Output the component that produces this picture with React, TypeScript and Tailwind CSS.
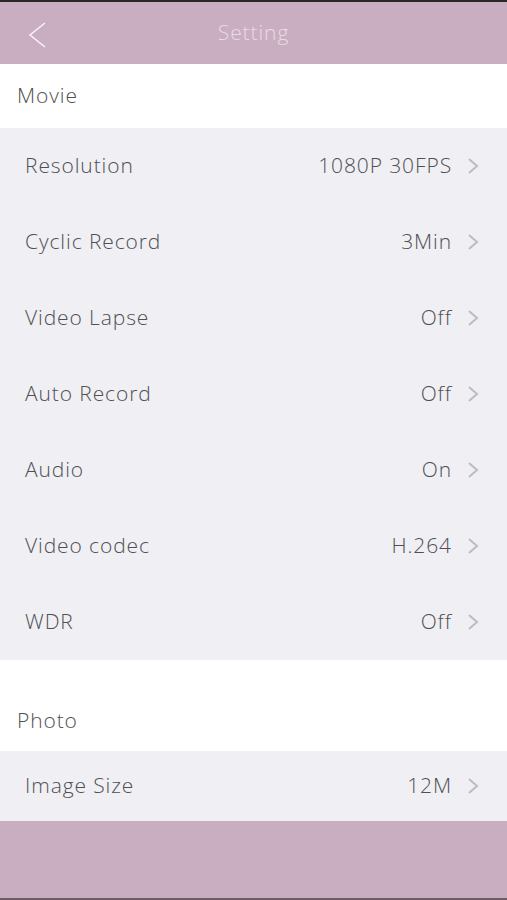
const movie: [string, string][] = [
  ["Resolution", "1080P 30FPS"],
  ["Cyclic Record", "3Min"],
  ["Video Lapse", "Off"],
  ["Auto Record", "Off"],
  ["Audio", "On"],
  ["Video codec", "H.264"],
  ["WDR", "Off"],
];

function Chevron() {
  return (
    <svg width="14" height="18" viewBox="0 0 14 18" className="shrink-0">
      <path d="M3 2 L11 9 L3 16" fill="none" stroke="#bdbdc1" strokeWidth="2" />
    </svg>
  );
}

function Row({ label, value, h }: { label: string; value: string; h: string }) {
  return (
    <div className={`flex items-center justify-between pl-[25px] pr-[27px] ${h}`}>
      <span>{label}</span>
      <span className="flex items-center gap-[14px]">
        {value}
        <Chevron />
      </span>
    </div>
  );
}

export default function App() {
  return (
    <div
      className="w-[507px] h-[900px] flex flex-col bg-white text-[21px] font-light tracking-[0.9px] text-[#505053]"
      style={{ fontFamily: "'Open Sans', Arial, sans-serif" }}
    >
      <div className="h-[2px] bg-[#2b2628]" />
      <header className="h-[62px] bg-[#c8aec0] flex items-center relative">
        <svg className="absolute left-[26px] top-[19px]" width="22" height="28" viewBox="0 0 22 28">
          <path d="M19 2 L4 14 L19 26" fill="none" stroke="#fbf4f8" strokeWidth="1.5" />
        </svg>
        <div className="flex-1 text-center text-[#eadbe5] text-[21px]">Setting</div>
      </header>
      <div className="h-[64px] flex items-center pl-[17px]">Movie</div>
      <div className="bg-[#efeff4]">
        {movie.map(([l, v]) => (
          <Row key={l} label={l} value={v} h="h-[76px]" />
        ))}
      </div>
      <div className="h-[91px] flex items-end pb-[15px] pl-[17px]">Photo</div>
      <div className="bg-[#efeff4]">
        <Row label="Image Size" value="12M" h="h-[70px]" />
      </div>
      <div className="flex-1 bg-[#c8aec0]" />
      <div className="h-[2px] bg-[#6f5c68]" />
    </div>
  );
}
